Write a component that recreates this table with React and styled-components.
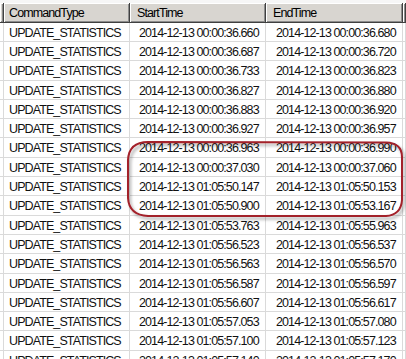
import React from 'react';
import styled, { createGlobalStyle } from 'styled-components';

const GlobalStyle = createGlobalStyle`
  html, body {
    margin: 0;
    padding: 0;
    background: #ffffff;
  }
  body {
    font-family: "Liberation Sans", Arial, sans-serif;
    overflow: hidden;
  }
`;

const columns = [
  { key: 'stub', label: '', width: '4px', headPad: 0, cellPad: 0 },
  { key: 'type', label: 'CommandType', width: '126px', headPad: 5, cellPad: 5 },
  { key: 'start', label: 'StartTime', width: '136px', headPad: 7, cellPad: 9 },
  { key: 'end', label: 'EndTime', width: '137px', headPad: 7, cellPad: 10 },
  { key: 'rest', label: '', width: 'auto', headPad: 0, cellPad: 0 },
];

const times = [
  ['00:00:36.660', '00:00:36.680'],
  ['00:00:36.687', '00:00:36.720'],
  ['00:00:36.733', '00:00:36.823'],
  ['00:00:36.827', '00:00:36.880'],
  ['00:00:36.883', '00:00:36.920'],
  ['00:00:36.927', '00:00:36.957'],
  ['00:00:36.963', '00:00:36.990'],
  ['00:00:37.030', '00:00:37.060'],
  ['01:05:50.147', '01:05:50.153'],
  ['01:05:50.900', '01:05:53.167'],
  ['01:05:53.763', '01:05:55.963'],
  ['01:05:56.523', '01:05:56.537'],
  ['01:05:56.563', '01:05:56.570'],
  ['01:05:56.587', '01:05:56.597'],
  ['01:05:56.607', '01:05:56.617'],
  ['01:05:57.053', '01:05:57.080'],
  ['01:05:57.100', '01:05:57.123'],
  ['01:05:57.140', '01:05:57.170'],
];

const rows = times.map(([start, end]) => ({
  type: 'UPDATE_STATISTICS',
  start: `2014-12-13 ${start}`,
  end: `2014-12-13 ${end}`,
}));

const Page = styled.div`
  position: relative;
  width: 406px;
  height: 359px;
  overflow: hidden;
  background: #ffffff;
`;

const TopStrip = styled.div`
  height: 3px;
  background: #f6f6f6;
`;

const HeaderRow = styled.div`
  display: flex;
  height: 19.7px;
`;

const HeaderCell = styled.div`
  box-sizing: border-box;
  flex: ${(p) => (p.$width === 'auto' ? '1 1 auto' : `0 0 ${p.$width}`)};
  padding-left: ${(p) => p.$pad}px;
  background: #d8d5d0;
  border-right: 1px solid #404040;
  border-bottom: 1px solid #404040;
  box-shadow: inset 1px 1px 0 #ffffff, inset -1px -1px 0 #8c8c8c;
  font-size: 12.5px;
  letter-spacing: -0.9px;
  line-height: 20px;
  color: #000000;
  white-space: nowrap;
  overflow: hidden;
`;

const Body = styled.div`
  display: flex;
  flex-direction: column;
`;

const Row = styled.div`
  display: flex;
  flex: 0 0 19.31px;
  height: 19.31px;
`;

const Cell = styled.div`
  box-sizing: border-box;
  flex: ${(p) => (p.$width === 'auto' ? '1 1 auto' : `0 0 ${p.$width}`)};
  padding-left: ${(p) => p.$pad}px;
  border-right: 1px solid #dadada;
  border-bottom: 1px solid #dadada;
  font-size: 12.5px;
  letter-spacing: -0.9px;
  line-height: 20px;
  color: #111111;
  white-space: nowrap;
  overflow: hidden;
`;

const Annotation = styled.svg`
  position: absolute;
  left: 0;
  top: 0;
  width: 406px;
  height: 359px;
  pointer-events: none;
`;

function Highlight() {
  return (
    <Annotation viewBox="0 0 406 359">
      <defs>
        <filter id="marker-shadow" x="-10%" y="-20%" width="130%" height="150%">
          <feDropShadow dx="2" dy="2.5" stdDeviation="1.6" floodColor="#000" floodOpacity="0.35" />
        </filter>
      </defs>
      <path
        d="M 148 142 L 386 142.5 Q 402 143 402 157 L 402 200 Q 401 215 386 216 L 148 216 Q 129 215 128 198 L 128 160 Q 129 142 148 142 Z"
        fill="none"
        stroke="#a3202a"
        strokeWidth="2"
        strokeLinejoin="round"
        filter="url(#marker-shadow)"
      />
    </Annotation>
  );
}

export default function App() {
  return (
    <Page>
      <GlobalStyle />
      <TopStrip />
      <HeaderRow>
        {columns.map((col) => (
          <HeaderCell key={col.key} $width={col.width} $pad={col.headPad}>
            {col.label}
          </HeaderCell>
        ))}
      </HeaderRow>
      <Body>
        {rows.map((row, i) => (
          <Row key={i}>
            {columns.map((col) => (
              <Cell key={col.key} $width={col.width} $pad={col.cellPad}>
                {row[col.key] || ''}
              </Cell>
            ))}
          </Row>
        ))}
      </Body>
      <Highlight />
    </Page>
  );
}
